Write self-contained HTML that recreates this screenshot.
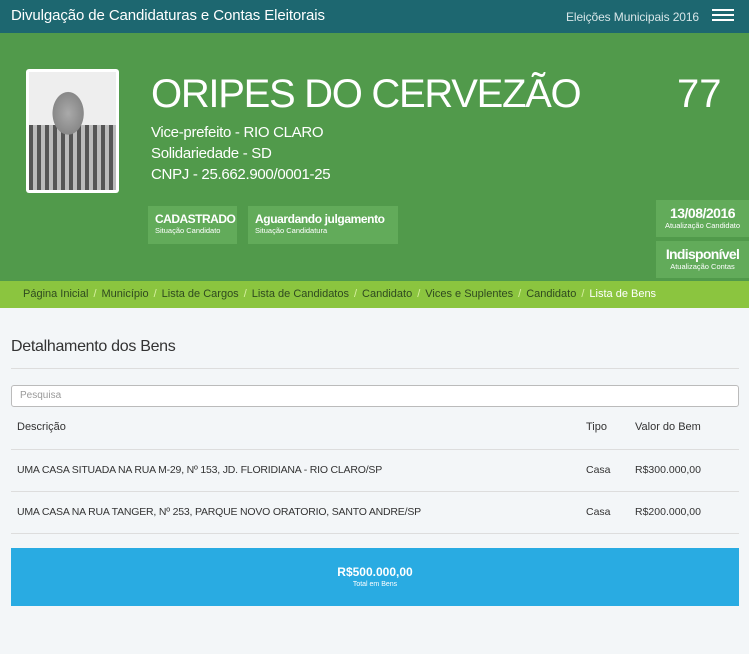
<!DOCTYPE html><html><head><meta charset="utf-8"><style>
body{margin:0;width:749px;height:654px;background:#f3f6f8;font-family:"Liberation Sans",sans-serif;overflow:hidden;position:relative}
.a{position:absolute;white-space:nowrap}
.top{left:0;top:0;width:749px;height:33px;background:#1d6770;color:#fff}
.green{left:0;top:33px;width:749px;height:248px;background:#519a4b;color:#fff}
.bc{left:0;top:281px;width:749px;height:27px;background:#8bc53f;font-size:11px;color:#2f4a1f;line-height:27px}
.bc span{color:#d8f0a0;margin:0 5px}
.badge{background:#62ab5a;color:#fff;text-align:center}
</style></head><body>
<div class="a top"><div class="a" style="left:11px;top:7px;font-size:15px;letter-spacing:-0.1px">Divulgação de Candidaturas e Contas Eleitorais</div>
<div class="a" style="left:566px;top:10px;font-size:12px;color:#d7e6e8;letter-spacing:-0.1px">Eleições Municipais 2016</div>
<div class="a" style="left:712px;top:9px;width:22px;height:2px;background:#fff;box-shadow:0 5px 0 #fff,0 10px 0 #fff"></div></div>
<div class="a green">
<div class="a" style="left:26px;top:36px;width:93px;height:124px;background:#fff;border-radius:3px"><div style="margin:3px;height:118px;background:radial-gradient(ellipse 22px 30px at 45% 35%,#aaa 0,#888 70%,transparent 72%),linear-gradient(#eee 0,#eee 45%,transparent 45%),repeating-linear-gradient(90deg,#555 0 4px,#bbb 4px 8px);background-color:#eee"></div></div>
<div class="a" style="left:151px;top:38px;font-size:40px;line-height:46px;letter-spacing:-1.3px">ORIPES DO CERVEZÃO</div>
<div class="a" style="left:677px;top:38px;font-size:40px;line-height:46px">77</div>
<div class="a" style="left:151px;top:89px;font-size:15px;line-height:21px;letter-spacing:-0.3px">Vice-prefeito - RIO CLARO<br>Solidariedade - SD<br>CNPJ - 25.662.900/0001-25</div>
<div class="a badge" style="left:148px;top:173px;width:89px;height:38px;text-align:left"><div style="margin:6px 0 0 7px;font-size:12px;font-weight:bold;letter-spacing:-0.5px">CADASTRADO</div><div style="margin-left:7px;font-size:7.5px">Situação Candidato</div></div>
<div class="a badge" style="left:248px;top:173px;width:150px;height:38px;text-align:left"><div style="margin:6px 0 0 7px;font-size:12px;font-weight:bold;letter-spacing:-0.4px">Aguardando julgamento</div><div style="margin-left:7px;font-size:7.5px">Situação Candidatura</div></div>
<div class="a badge" style="left:656px;top:167px;width:93px;height:37px"><div style="margin-top:5px;font-size:14px;font-weight:bold;letter-spacing:-0.5px">13/08/2016</div><div style="font-size:7.5px">Atualização Candidato</div></div>
<div class="a badge" style="left:656px;top:208px;width:93px;height:37px"><div style="margin-top:5px;font-size:14px;font-weight:bold;letter-spacing:-0.7px">Indisponível</div><div style="font-size:7.5px">Atualização Contas</div></div>
</div>
<div class="a bc" style="padding-left:23px;box-sizing:border-box;letter-spacing:0">Página Inicial<span>/</span>Município<span>/</span>Lista de Cargos<span>/</span>Lista de Candidatos<span>/</span>Candidato<span>/</span>Vices e Suplentes<span>/</span>Candidato<span>/</span><b style="color:#fff;font-weight:normal">Lista de Bens</b></div>
<div class="a" style="left:11px;top:338px;font-size:16px;color:#333;letter-spacing:-0.3px">Detalhamento dos Bens</div>
<div class="a" style="left:11px;top:368px;width:728px;height:1px;background:#ddd"></div>
<div class="a" style="left:11px;top:385px;width:726px;height:20px;background:#fff;border:1px solid #bbb;border-radius:3px;font-size:10px;color:#999;line-height:20px;text-indent:8px">Pesquisa</div>
<div class="a" style="left:17px;top:421px;font-size:11px;color:#333">Descrição</div>
<div class="a" style="left:586px;top:421px;font-size:11px;color:#333">Tipo</div>
<div class="a" style="left:635px;top:421px;font-size:11px;color:#333">Valor do Bem</div>
<div class="a" style="left:11px;top:449px;width:728px;height:1px;background:#ddd"></div>
<div class="a" style="left:17px;top:464px;font-size:10.5px;color:#333;letter-spacing:-0.2px">UMA CASA SITUADA NA RUA M-29, Nº 153, JD. FLORIDIANA - RIO CLARO/SP</div>
<div class="a" style="left:586px;top:464px;font-size:10.5px;color:#333">Casa</div>
<div class="a" style="left:635px;top:464px;font-size:10.5px;color:#333">R$300.000,00</div>
<div class="a" style="left:11px;top:491px;width:728px;height:1px;background:#ddd"></div>
<div class="a" style="left:17px;top:506px;font-size:10.5px;color:#333;letter-spacing:-0.2px">UMA CASA NA RUA TANGER, Nº 253, PARQUE NOVO ORATORIO, SANTO ANDRE/SP</div>
<div class="a" style="left:586px;top:506px;font-size:10.5px;color:#333">Casa</div>
<div class="a" style="left:635px;top:506px;font-size:10.5px;color:#333">R$200.000,00</div>
<div class="a" style="left:11px;top:533px;width:728px;height:1px;background:#ddd"></div>
<div class="a" style="left:11px;top:548px;width:728px;height:58px;background:#29abe2;color:#fff;text-align:center"><div style="margin-top:17px;font-size:12px;font-weight:bold">R$500.000,00</div><div style="font-size:7px;margin-top:2px">Total em Bens</div></div>
</body></html>
